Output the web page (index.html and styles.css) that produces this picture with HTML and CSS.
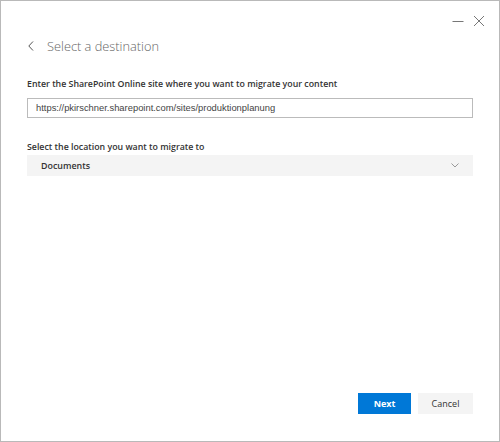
FILE: index.html
```html
<!DOCTYPE html>
<html lang="en">
<head>
    <meta charset="UTF-8">
    <title>Select a destination</title>
    <link rel="stylesheet" href="styles.css">
</head>
<body>

<div class="window">
    <div class="title-bar">
        <button class="win-btn" title="Minimize">
            <svg width="12" height="12" viewBox="0 0 12 12"><path d="M0.5 6.5h11" stroke="#777" stroke-width="1" fill="none"/></svg>
        </button>
        <button class="win-btn" title="Close">
            <svg width="12" height="12" viewBox="0 0 12 12"><path d="M1 1l10 10M11 1L1 11" stroke="#777" stroke-width="1" fill="none"/></svg>
        </button>
    </div>

    <div class="header">
        <button class="back" title="Back">
            <svg width="6" height="10" viewBox="0 0 6 10"><path d="M5 0.5L0.8 5 5 9.5" stroke="#555" stroke-width="1" fill="none"/></svg>
        </button>
        <h1 class="heading">Select a destination</h1>
    </div>

    <div class="content">
        <div class="field">
            <label class="label" for="site">Enter the SharePoint Online site where you want to migrate your content</label>
            <input class="text-input" id="site" type="text" value="https://pkirschner.sharepoint.com/sites/produktionplanung">
        </div>

        <div class="field">
            <div class="label">Select the location you want to migrate to</div>
            <div class="dropdown">
                <span>Documents</span>
                <svg width="8" height="5" viewBox="0 0 8 5"><path d="M0.5 0.5L4 4 7.5 0.5" stroke="#999" stroke-width="1" fill="none"/></svg>
            </div>
        </div>
    </div>

    <div class="footer">
        <button class="btn primary">Next</button>
        <button class="btn">Cancel</button>
    </div>
</div>

</body>
</html>
```

FILE: styles.css
```css
html, body {
    margin: 0;
    height: 100%;
}

body {
    font-family: "Open Sans", "Noto Sans", sans-serif;
    background-color: #fff;
}

.window {
    box-sizing: border-box;
    height: 442px;
    border: 1px solid #b9b9b9;
    display: flex;
    flex-direction: column;
}

.title-bar {
    display: flex;
    justify-content: flex-end;
    gap: 9px;
    padding: 14px 14px 0 0;
}

.win-btn {
    background: none;
    border: none;
    padding: 0;
    width: 12px;
    height: 12px;
    display: flex;
}

.header {
    display: flex;
    align-items: center;
    gap: 13px;
    padding: 9px 0 0 27px;
}

.back {
    background: none;
    border: none;
    padding: 0;
    display: flex;
}

.heading {
    margin: 0;
    font-size: 12.8px;
    font-weight: 300;
    color: #666;
    line-height: 20px;
}

.content {
    flex: 1;
    padding: 0 26px;
}

.field {
    margin-top: 21px;
}

.field + .field {
    margin-top: 22px;
}

.label {
    display: block;
    font-size: 8.8px;
    font-weight: 600;
    color: #333;
    line-height: 15px;
    margin-bottom: 2px;
}

.field + .field .label {
    margin-bottom: 0;
}

.text-input {
    box-sizing: border-box;
    width: 100%;
    height: 20px;
    border: 1px solid #bbb;
    padding: 0 8px;
    font-family: "Liberation Sans", Arial, sans-serif;
    font-size: 9.4px;
    color: #444;
}

.dropdown {
    box-sizing: border-box;
    height: 21px;
    background-color: #f4f4f4;
    display: flex;
    align-items: center;
    justify-content: space-between;
    padding: 0 14px;
    font-size: 8.9px;
    font-weight: 600;
    color: #333;
}

.footer {
    display: flex;
    justify-content: flex-end;
    gap: 7px;
    padding: 0 26px 27px 0;
}

.btn {
    width: 55px;
    height: 21px;
    border: none;
    background-color: #f4f4f4;
    color: #333;
    font-family: "Open Sans", sans-serif;
    font-size: 9px;
    padding: 0;
}

.btn.primary {
    width: 53px;
    background-color: #0078d7;
    color: #fff;
    font-weight: 700;
}
```
